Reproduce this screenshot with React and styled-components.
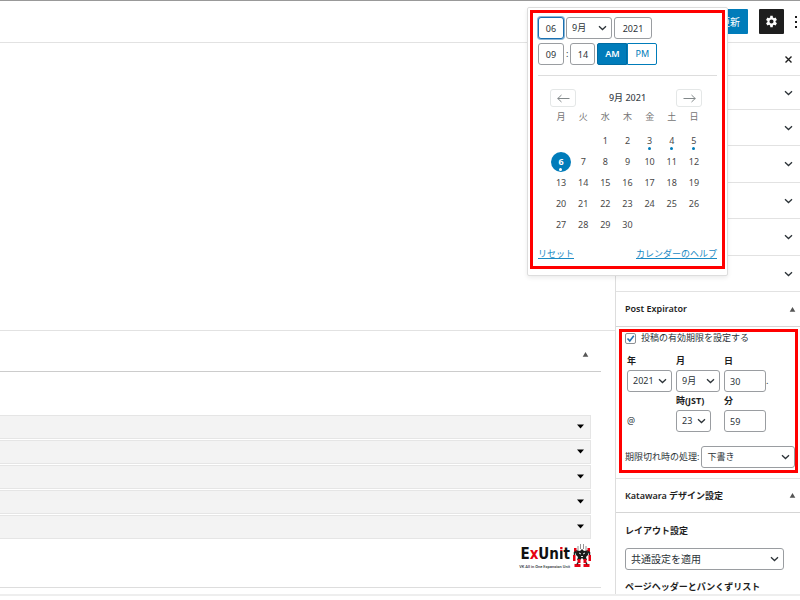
import React from 'react';
import styled, { createGlobalStyle, css } from 'styled-components';

const GlobalStyle = createGlobalStyle`
  * { box-sizing: border-box; }
  body {
    margin: 0;
    background: #fff;
    color: #2c3338;
    font-family: "Noto Sans", "Noto Sans CJK JP", sans-serif;
    font-size: 9px;
    line-height: 14px;
  }
  button, input, select {
    font: inherit;
    color: inherit;
    margin: 0;
  }
`;

const App = styled.div`
  display: flex;
  flex-direction: column;
  height: 100vh;
  overflow: hidden;
`;

const TopBar = styled.header`
  display: flex;
  flex: none;
  align-items: center;
  justify-content: flex-end;
  gap: 11px;
  height: 43px;
  border-top: 1px solid #999;
  border-bottom: 1px solid #e2e2e2;
`;

const barButton = css`
  flex: none;
  height: 25px;
  border: 0;
  border-radius: 1px;
  padding: 0;
`;

const UpdateButton = styled.button`
  ${barButton}
  padding: 0 8px;
  color: #fff;
  background: #007cba;
  font-size: 10px;
`;

const SettingsButton = styled.button`
  ${barButton}
  display: grid;
  place-items: center;
  width: 25px;
  color: #fff;
  background: #1e1e1e;
`;

const MoreButton = styled.button`
  ${barButton}
  display: grid;
  align-items: center;
  justify-content: end;
  width: 5px;
  background: none;
`;

const Body = styled.div`
  display: flex;
  flex: 1;
  min-height: 0;
`;

const Main = styled.main`
  display: flex;
  flex: 1;
  flex-direction: column;
  min-width: 0;
`;

const Editor = styled.div`
  flex: 1;
`;

const MetaBoxes = styled.div`
  padding: 0 14px 6px 0;
  border-top: 1px solid #e2e2e2;
`;

const MetaBox = styled.section`
  border-bottom: 1px solid #ddd;
`;

const MetaHeader = styled.div`
  display: flex;
  align-items: center;
  justify-content: flex-end;
  height: 41px;
  padding: 6px 12px 0 0;
  border-bottom: 1px solid #ccc;
`;

const MetaContent = styled.div`
  padding: 43px 10px 18px 0;
`;

const Accordion = styled.button`
  display: flex;
  align-items: center;
  justify-content: flex-end;
  width: 100%;
  height: 24px;
  margin-bottom: 1px;
  padding: 0 6px 2px;
  border: 1px solid #e5e5e5;
  border-left: 0;
  background: #f3f3f3;
`;

const Logo = styled.div`
  display: flex;
  justify-content: flex-end;
  gap: 3px;
  height: 25px;
  margin-top: 5px;
`;

const LogoName = styled.div`
  color: #111;
  font-family: "DejaVu Sans Condensed", "DejaVu Sans", sans-serif;
  font-size: 15px;
  font-weight: 700;
  line-height: 21px;
  text-align: right;
`;

const LogoRed = styled.span`
  color: #e60012;
`;

const LogoDotted = styled.span`
  color: transparent;
  background: linear-gradient(#e60012 6px, #111 6px);
  background-clip: text;
`;

const Tagline = styled.div`
  font-family: Roboto, "Liberation Sans", sans-serif;
  font-size: 4px;
  font-weight: 500;
  line-height: 4px;
  text-align: right;
  white-space: nowrap;
`;

const Sidebar = styled.aside`
  flex: none;
  width: 185px;
  overflow: hidden;
  border-left: 1px solid #ddd;
`;

const SidebarRow = styled.div`
  display: flex;
  align-items: center;
  justify-content: flex-end;
  height: ${(props) => props.$height}px;
  padding-right: 7px;
  border-bottom: 1px solid #e2e2e2;
`;

const IconButton = styled.button`
  display: grid;
  padding: 0;
  border: 0;
  background: none;
`;

const PanelTitle = styled.div`
  display: flex;
  align-items: center;
  justify-content: space-between;
  height: 35px;
  padding: 0 4px 0 9px;
  border-bottom: 1px solid #d5d5d5;
  color: #1e1e1e;
  ${(props) => props.$divided && css` border-top: 1px solid #e2e2e2; `}

  h2 {
    margin: 0;
    font-size: 9px;
    font-weight: 600;
  }
`;

const Highlight = styled.div`
  border: 3px solid #f00;
`;

const ExpiratorHighlight = styled(Highlight)`
  margin: 2px 2px 5px 3px;
  padding: 0 0 2px 3px;
`;

const CheckLabel = styled.label`
  display: flex;
  align-items: center;
  gap: 5px;
  height: 12px;
  white-space: nowrap;
`;

const Check = styled.span`
  display: grid;

  input, svg { grid-area: 1 / 1; }
  input {
    appearance: none;
    width: 11px;
    height: 11px;
    border: 1px solid #8c8f94;
    border-radius: 2px;
  }
  svg { pointer-events: none; }
  input:not(:checked) + svg { visibility: hidden; }
`;

const DateGrid = styled.div`
  display: grid;
  grid-template-columns: 45px 44px 1fr;
  grid-auto-rows: 40px;
  column-gap: 4px;
  margin: 10px 0 12px 2px;
`;

const FieldLabel = styled.label`
  display: block;
  height: 16px;
  color: #1e1e1e;
  font-weight: 700;
`;

const FieldCell = styled.div`
  display: flex;
  align-items: center;
  height: 22px;
`;

const AtSign = styled.div`
  padding-top: 20px;
`;

const TextInput = styled.input`
  width: ${(props) => props.$width}px;
  height: 22px;
  padding: 0 5px;
  border: 1px solid ${(props) => (props.$active ? '#1a6fb0' : '#9a9da1')};
  border-radius: 3px;
  background: #fff;
  text-align: ${(props) => (props.$center ? 'center' : 'left')};
  ${(props) => props.$center && css` padding: 0; `}
  ${(props) => props.$active && css` box-shadow: 0 0 0 1px rgba(26, 111, 176, 0.5); `}
`;

const SelectBox = styled.span`
  display: grid;
  align-items: center;
  width: ${(props) => (props.$width ? `${props.$width}px` : '100%')};

  select, svg { grid-area: 1 / 1; }
  select {
    appearance: none;
    width: 100%;
    height: 22px;
    padding: 0 5px;
    border: 1px solid #9a9da1;
    border-radius: 3px;
    background: #fff;
  }
  svg {
    justify-self: end;
    margin-right: 5px;
    pointer-events: none;
  }
`;

const ActionRow = styled.div`
  display: flex;
  align-items: center;
  gap: 2px;
  white-space: nowrap;
`;

const DesignBody = styled.div`
  padding: 11px 16px 0 9px;
`;

const SettingLabel = styled.label`
  display: block;
  color: #1e1e1e;
  font-weight: 700;
  white-space: nowrap;
`;

const LayoutSelect = styled.div`
  margin: 10px 0;
  font-size: 10px;
`;

const Footer = styled.footer`
  flex: none;
  height: 6px;
  border-top: 2px solid #eee;
`;

const Popover = styled.div`
  position: absolute;
  top: 7px;
  right: 72px;
  width: 201px;
  padding: 2px 2px 6px;
  border: 1px solid #ddd;
  border-radius: 2px;
  background: #fff;
  box-shadow: 0 2px 4px rgba(0, 0, 0, 0.08);
`;

const PickerHighlight = styled(Highlight)`
  padding: 4px 5px 5px;
`;

const TimeRow = styled.div`
  display: flex;
  align-items: center;
  gap: 2px;
  margin-bottom: 4px;
`;

const Period = styled.div`
  display: flex;
`;

const PeriodButton = styled.button`
  width: 30px;
  height: 22px;
  padding: 0;
  border: 1px solid #007cba;
  border-radius: 0 2px 2px 0;
  color: #007cba;
  background: #fff;
  ${(props) => props.$on && css`
    border-color: #006ba1;
    border-radius: 2px 0 0 2px;
    color: #fff;
    background: #007cba;
    font-weight: 600;
  `}
`;

const Calendar = styled.div`
  margin-top: 10px;
  padding: 13px 12px 0;
  border-top: 1px solid #ddd;
`;

const MonthNav = styled.div`
  display: grid;
  grid-template-columns: 29px 1fr 29px;
  align-items: center;
  text-align: center;
  color: #3c434a;
  font-weight: 500;
`;

const NavButton = styled.button`
  display: grid;
  place-items: center;
  width: 26px;
  height: 18px;
  padding: 0;
  border: 1px solid #e4e7e7;
  border-radius: 3px;
  color: #82888a;
  background: #fff;
`;

const Days = styled.table`
  width: 100%;
  table-layout: fixed;
  border-collapse: collapse;
  color: #484848;
  text-align: center;

  th {
    height: 23px;
    padding: 0;
    color: #757575;
    font-weight: 400;
    line-height: 20px;
    vertical-align: top;
  }
  td {
    height: 21px;
    padding: 0;
  }
`;

const Day = styled.button`
  position: relative;
  display: block;
  width: 20px;
  height: 20px;
  margin: 0 auto;
  padding: 0;
  border: 0;
  border-radius: 50%;
  background: none;
  ${(props) => props.$selected && css` color: #fff; background: #007cba; font-weight: 700; `}
  ${(props) => props.$event && css`
    &::after {
      content: '';
      position: absolute;
      bottom: 1px;
      left: 50%;
      width: 3px;
      height: 3px;
      margin-left: -2px;
      border-radius: 50%;
      background: ${props.$selected ? '#fff' : '#007cba'};
    }
  `}
`;

const PickerLinks = styled.div`
  display: flex;
  justify-content: space-between;
  margin-top: 12px;

  a { color: #1a8ac4; }
`;

const Chevron = () => (
  <svg width="9" height="6" viewBox="0 0 9 6" fill="none" stroke="#2c3338" strokeWidth="1.3">
    <path d="M1 1.2 4.5 4.5 8 1.2" />
  </svg>
);

const Triangle = ({ up }) => (
  <svg width="7" height="5" viewBox="0 0 7 5">
    {up ? <path d="M3.5 0 6.300 4.700H.7z" fill="#555" /> : <path d="M0 .5h7L3.5 4.5z" fill="#000" />}
  </svg>
);

const Gear = () => (
  <svg width="13" height="13" viewBox="0 0 24 24" fill="currentColor" fillRule="evenodd">
    <path d="M19.4 13c.1-.3.1-.7.1-1s0-.7-.1-1l2.6-2-2.5-4.4-3 1.2c-.6-.5-1.2-.8-1.9-1.1l-.4-3.2H9.8l-.4 3.2c-.7.3-1.3.6-1.9 1.1l-3-1.2L2 9l2.6 2c0 .3-.1.7-.1 1s0 .7.1 1L2 15l2.5 4.4 3-1.2c.6.5 1.2.8 1.9 1.1l.4 3.2h4.4l.4-3.2c.7-.3 1.3-.6 1.9-1.1l3 1.2L22 15zM12 15.8a3.8 3.8 0 1 1 0-7.6 3.8 3.8 0 0 1 0 7.6z" />
  </svg>
);

const Dots = () => (
  <svg width="5" height="12" viewBox="0 0 5 12" fill="#1e1e1e">
    <rect y="0" width="2" height="2" />
    <rect y="5" width="2" height="2" />
    <rect y="10" width="2" height="2" />
  </svg>
);

const Close = () => (
  <svg width="9" height="9" viewBox="0 0 9 9" stroke="#1e1e1e" strokeWidth="1.4">
    <path d="M1.5 1.5l6 6M7.5 1.5l-6 6" />
  </svg>
);

const Arrow = ({ right }) => (
  <svg width="13" height="9" viewBox="0 0 13 9" fill="none" stroke="currentColor">
    <path d={right ? 'M.5 4.5h12M8.5 1l3.7 3.5L8.5 8' : 'M12.5 4.5H.5M4.5 1 .8 4.5 4.5 8'} />
  </svg>
);

const Robot = () => (
  <svg width="18" height="23" viewBox="0 0 18 23">
    <path d="M5 2v4M7.5 0v5M10.5 0v5M13 2v4" stroke="#777" strokeWidth=".8" />
    <path d="M3 6l4 1 2-2 2 2 4-1v5l-2 2 1 3h-3l-2-2-2 2H4l1-3-2-2z" fill="#1a1a1a" />
    <path d="M6 9l2 1M12 9l-2 1M8 12.5h2" stroke="#fff" strokeWidth=".9" />
    <path d="M1 4h2.5v4H1zM14.5 4H17v4h-2.5zM0 11h2.5v6H0zM15.5 11H18v6h-2.5zM4.5 15h3v4h-3zM10.5 15h3v4h-3zM1.5 20h6v3h-6zM10.5 20h6v3h-6z" fill="#e60012" />
    <path d="M2 7l2 3M16 7l-2 3M1.5 8v3M16.5 8v3M5 18.5l-1 2M13 18.5l1 2" stroke="#222" strokeWidth="1.5" />
  </svg>
);

const Select = ({ width, children, ...rest }) => (
  <SelectBox $width={width}>
    <select {...rest}>{children}</select>
    <Chevron />
  </SelectBox>
);

const panelHeights = [34, 36, 37, 36, 37, 36];
const weekdays = ['月', '火', '水', '木', '金', '土', '日'];
const weeks = [
  [0, 0, 1, 2, 3, 4, 5],
  [6, 7, 8, 9, 10, 11, 12],
  [13, 14, 15, 16, 17, 18, 19],
  [20, 21, 22, 23, 24, 25, 26],
  [27, 28, 29, 30, 0, 0, 0],
];
const eventDays = [3, 4, 5, 6];

function DatePicker() {
  return (
    <Popover>
      <PickerHighlight>
        <TimeRow>
          <TextInput $width={26} $center $active aria-label="日" defaultValue="06" />
          <Select width={46} aria-label="月"><option>9月</option></Select>
          <TextInput $width={38} $center aria-label="年" defaultValue="2021" />
        </TimeRow>
        <TimeRow>
          <TextInput $width={26} $center aria-label="時" defaultValue="09" />
          <span>:</span>
          <TextInput $width={25} $center aria-label="分" defaultValue="14" />
          <Period>
            <PeriodButton $on>AM</PeriodButton>
            <PeriodButton>PM</PeriodButton>
          </Period>
        </TimeRow>
        <Calendar>
          <MonthNav>
            <NavButton aria-label="前の月"><Arrow /></NavButton>
            <span>9月 2021</span>
            <NavButton aria-label="次の月"><Arrow right /></NavButton>
          </MonthNav>
          <Days>
            <thead>
              <tr>{weekdays.map((name) => <th key={name}>{name}</th>)}</tr>
            </thead>
            <tbody>
              {weeks.map((week) => (
                <tr key={week.join()}>
                  {week.map((day, i) => (
                    <td key={weekdays[i]}>
                      {day > 0 && (
                        <Day $selected={day === 6} $event={eventDays.includes(day)}>{day}</Day>
                      )}
                    </td>
                  ))}
                </tr>
              ))}
            </tbody>
          </Days>
        </Calendar>
        <PickerLinks>
          <a href="#reset">リセット</a>
          <a href="#help">カレンダーのヘルプ</a>
        </PickerLinks>
      </PickerHighlight>
    </Popover>
  );
}

function PostExpirator() {
  return (
    <ExpiratorHighlight>
      <CheckLabel>
        <Check>
          <input type="checkbox" defaultChecked />
          <svg width="11" height="11" viewBox="0 0 11 11" fill="none" stroke="#2271b1" strokeWidth="1.6">
            <path d="M2.5 5.5l2.3 2.5 4-5.2" />
          </svg>
        </Check>
        投稿の有効期限を設定する
      </CheckLabel>
      <DateGrid>
        <div>
          <FieldLabel htmlFor="year">年</FieldLabel>
          <FieldCell><Select id="year" width={45}><option>2021</option></Select></FieldCell>
        </div>
        <div>
          <FieldLabel htmlFor="month">月</FieldLabel>
          <FieldCell><Select id="month" width={44}><option>9月</option></Select></FieldCell>
        </div>
        <div>
          <FieldLabel htmlFor="day">日</FieldLabel>
          <FieldCell><TextInput id="day" $width={42} defaultValue="30" />.</FieldCell>
        </div>
        <AtSign>@</AtSign>
        <div>
          <FieldLabel htmlFor="hour">時(JST)</FieldLabel>
          <FieldCell><Select id="hour" width={35}><option>23</option></Select></FieldCell>
        </div>
        <div>
          <FieldLabel htmlFor="minute">分</FieldLabel>
          <FieldCell><TextInput id="minute" $width={42} defaultValue="59" /></FieldCell>
        </div>
      </DateGrid>
      <ActionRow>
        <label htmlFor="expire-action">期限切れ時の処理:</label>
        <Select id="expire-action"><option>下書き</option></Select>
      </ActionRow>
    </ExpiratorHighlight>
  );
}

export default function EditorPage() {
  return (
    <App>
      <GlobalStyle />
      <TopBar>
        <UpdateButton>更新</UpdateButton>
        <SettingsButton aria-label="設定"><Gear /></SettingsButton>
        <MoreButton aria-label="オプション"><Dots /></MoreButton>
      </TopBar>
      <Body>
        <Main>
          <Editor />
          <MetaBoxes>
            <MetaBox>
              <MetaHeader>
                <IconButton aria-label="パネルを閉じる"><Triangle up /></IconButton>
              </MetaHeader>
              <MetaContent>
                {[1, 2, 3, 4, 5].map((n) => (
                  <Accordion key={n} aria-label={`セクション ${n}`}><Triangle /></Accordion>
                ))}
                <Logo>
                  <div>
                    <LogoName>E<LogoRed>x</LogoRed>Un<LogoDotted>i</LogoDotted>t</LogoName>
                    <Tagline>VK All in One Expansion Unit</Tagline>
                  </div>
                  <Robot />
                </Logo>
              </MetaContent>
            </MetaBox>
          </MetaBoxes>
        </Main>
        <Sidebar>
          <SidebarRow $height={33}>
            <IconButton aria-label="設定を閉じる"><Close /></IconButton>
          </SidebarRow>
          {panelHeights.map((height, i) => (
            <SidebarRow key={i} $height={height}>
              <IconButton aria-label={`パネル ${i + 1}`}><Chevron /></IconButton>
            </SidebarRow>
          ))}
          <PanelTitle>
            <h2>Post Expirator</h2>
            <IconButton aria-label="Post Expirator を閉じる"><Triangle up /></IconButton>
          </PanelTitle>
          <PostExpirator />
          <PanelTitle $divided>
            <h2>Katawara デザイン設定</h2>
            <IconButton aria-label="Katawara デザイン設定を閉じる"><Triangle up /></IconButton>
          </PanelTitle>
          <DesignBody>
            <SettingLabel htmlFor="layout">レイアウト設定</SettingLabel>
            <LayoutSelect>
              <Select id="layout"><option>共通設定を適用</option></Select>
            </LayoutSelect>
            <SettingLabel as="div">ページヘッダーとパンくずリスト</SettingLabel>
          </DesignBody>
        </Sidebar>
      </Body>
      <Footer />
      <DatePicker />
    </App>
  );
}
